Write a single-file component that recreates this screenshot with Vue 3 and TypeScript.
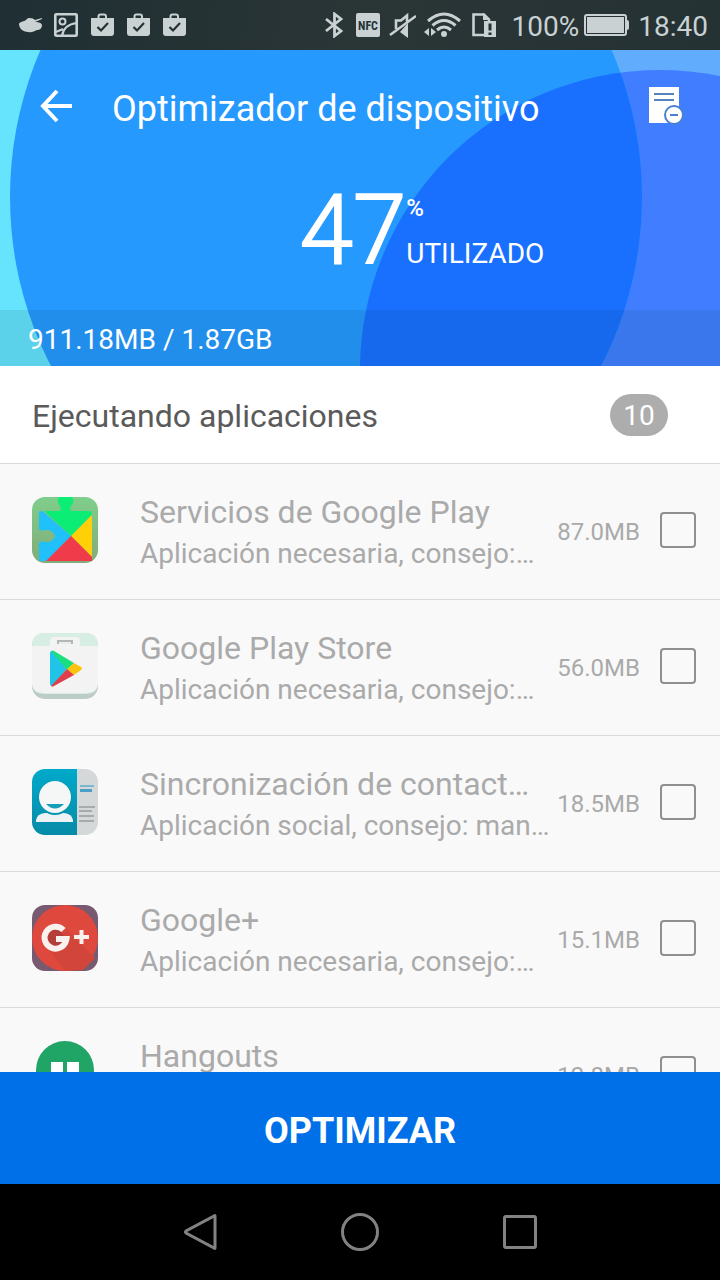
<script setup lang="ts">
import { ref } from 'vue'

interface RunningApp {
  id: string
  name: string
  advice: string
  size: string
  selected: boolean
}

const apps = ref<RunningApp[]>([
  { id: 'services', name: 'Servicios de Google Play', advice: 'Aplicación necesaria, consejo:…', size: '87.0MB', selected: false },
  { id: 'store', name: 'Google Play Store', advice: 'Aplicación necesaria, consejo:…', size: '56.0MB', selected: false },
  { id: 'contacts', name: 'Sincronización de contact…', advice: 'Aplicación social, consejo: man…', size: '18.5MB', selected: false },
  { id: 'plus', name: 'Google+', advice: 'Aplicación necesaria, consejo:…', size: '15.1MB', selected: false },
  { id: 'hangouts', name: 'Hangouts', advice: 'Aplicación social, consejo: man…', size: '12.8MB', selected: false },
])
</script>

<template>
  <div class="screen">
    <div class="status">
      <div class="notices">
        <svg width="24" height="26" viewBox="0 0 24 26" fill="#c9d1d3">
          <path d="M1 12c1-3 5-2 7-4 2-3 7-2 9 0l7-2v1l-7 3c2 0 6 0 7 3 0 3-2 5-5 5-3 1-5 3-9 2-4 0-9-3-9-8z" />
        </svg>
        <svg width="24" height="26" viewBox="0 0 24 26" fill="none" stroke="#c9d1d3" stroke-width="2.6">
          <rect x="1.3" y="2.3" width="21.4" height="21.4" rx="1" />
          <circle cx="8.5" cy="9.5" r="3" stroke-width="2" />
          <path d="M8 24c1-7 6-12 15-13M2 20l7-3" stroke-width="2.2" />
        </svg>
        <svg v-for="n in 3" :key="n" width="24" height="26" viewBox="0 0 24 26">
          <path d="M8.5 7V4.500Q8.500 2.500 10.500 2.500H14Q16 2.500 16 4.500V7" fill="none" stroke="#c9d1d3" stroke-width="2" />
          <path d="M1 6h23v15q0 3-3 3H4q-3 0-3-3z" fill="#c9d1d3" />
          <path d="M7.500 15l3.500 3.500 7-7.500" fill="none" stroke="#253233" stroke-width="2.2" />
        </svg>
      </div>
      <div class="signals">
        <svg width="24" height="26" viewBox="0 0 24 26" fill="none" stroke="#c9d1d3" stroke-width="2.800">
          <path d="M2 7l15 12-6.500 5V2L17 7 2 19" />
        </svg>
        <svg width="24" height="26" viewBox="0 0 24 26">
          <rect y="1" width="24" height="24" rx="2" fill="#c9d1d3" />
          <text x="12" y="18" text-anchor="middle" class="nfc">NFC</text>
        </svg>
        <svg width="28" height="26" viewBox="0 0 28 26" fill="none" stroke="#c9d1d3" stroke-width="2.600">
          <path d="M8 17V8.500h5L19 3.500v6M2 23L28 4" />
          <path d="M20 11v15l-8-6z" fill="#c9d1d3" stroke="none" />
        </svg>
        <svg width="40" height="26" viewBox="0 0 40 26" fill="none" stroke="#c9d1d3" stroke-width="3">
          <path d="M4 9Q20-5 36 9M8.500 13.500Q20 3.500 31.500 13.500M13 18Q20 12 27 18" />
          <circle cx="20" cy="22" r="3" fill="#c9d1d3" stroke="none" />
          <path d="M5 16v8l-5-4zM7 16v8l5-4z" fill="#c9d1d3" stroke="none" />
        </svg>
        <svg width="24" height="26" viewBox="0 0 24 26">
          <path d="M13 23H1.500V2.500H12l5 5V9" fill="none" stroke="#c9d1d3" stroke-width="2.600" />
          <path d="M11 1l7 7h-7zM12 9h12v16H12z" fill="#c9d1d3" />
          <path d="M18 11.500v7M18 20.500v2.500" stroke="#253233" stroke-width="3" />
        </svg>
      </div>
      <span class="charge">100%</span>
      <svg width="46" height="26" viewBox="0 0 46 26">
        <rect x="1" y="3" width="41" height="20" rx="2" fill="none" stroke="#c9d1d3" stroke-width="2" />
        <rect x="3" y="5" width="37" height="16" fill="#c9d1d3" />
        <path d="M42 8h1q2 0 2 2v6q0 2-2 2h-1z" fill="#c9d1d3" />
      </svg>
      <span class="clock">18:40</span>
    </div>

    <header class="hero">
      <svg class="backdrop" viewBox="0 0 720 316" preserveAspectRatio="none" aria-hidden="true">
        <defs>
          <clipPath id="big-disc"><ellipse cx="326" cy="147" rx="316" ry="343" /></clipPath>
        </defs>
        <rect width="360" height="316" fill="#66e4fd" />
        <rect x="360" width="360" height="316" fill="#62acfd" />
        <circle cx="660" cy="320" r="300" fill="#417eff" />
        <ellipse cx="326" cy="147" rx="316" ry="343" fill="#2699ff" />
        <circle cx="660" cy="320" r="300" fill="#1970ff" clip-path="url(#big-disc)" />
      </svg>
      <div class="toolbar">
        <button class="icon-button" type="button" aria-label="Atrás">
          <svg width="32" height="34" viewBox="0 0 32 34" fill="none" stroke="#fff" stroke-width="4">
            <path d="M32 17H3M17 2L3 17l14 15" />
          </svg>
        </button>
        <h1>Optimizador de dispositivo</h1>
        <button class="icon-button" type="button" aria-label="Lista de exclusión">
          <svg width="36" height="38" viewBox="0 0 36 38">
            <path d="M1 0h30v36H1z" fill="#fff" />
            <path d="M6 7h20M6 13h20" stroke="#5583bd" stroke-width="2" />
            <circle cx="26" cy="28" r="9" fill="#fff" stroke="#4a80d4" stroke-width="2" />
            <path d="M22 28h8" stroke="#4a80d4" stroke-width="2" />
          </svg>
        </button>
      </div>
      <div class="usage">
        <span class="number">47</span>
        <div class="labels">
          <span class="percent">%</span>
          <span class="used">UTILIZADO</span>
        </div>
      </div>
      <div class="memory">911.18MB / 1.87GB</div>
    </header>

    <div class="section">
      <h2>Ejecutando aplicaciones</h2>
      <span class="count">10</span>
    </div>

    <ul class="list">
      <li v-for="app in apps" :key="app.id">
        <label class="row">
          <svg v-if="app.id === 'services'" class="app-icon" viewBox="0 0 66 66">
            <defs>
              <linearGradient id="sage" x2="0" y2="1"><stop stop-color="#7fce8b" /><stop offset="1" stop-color="#83ab79" /></linearGradient>
              <clipPath id="puzzle"><path d="M10 14h17q3 0 1-5-4-4-1-9h13q3 5-1 9-2 5 1 5h17q3 0 3 3v47H7V46q2-3 6-1 8 1 10-6-2-7-10-6-4 2-6-1V17q0-3 3-3z" /></clipPath>
            </defs>
            <rect width="66" height="66" rx="13" fill="url(#sage)" />
            <g clip-path="url(#puzzle)">
              <path d="M0 0h66v11L39 39 6 8z" fill="#0ced76" />
              <path d="M6 10l33 29L13 66H6z" fill="#20c0fa" />
              <path d="M66 12L39 39l27 27z" fill="#ffcf08" />
              <path d="M39 39L12 66h54z" fill="#f03b4b" />
            </g>
          </svg>
          <svg v-else-if="app.id === 'store'" class="app-icon" viewBox="0 0 66 66">
            <rect width="66" height="66" rx="13" fill="#bdccc4" />
            <path d="M0 13Q0 0 13 0h40q13 0 13 13v37q0 11-13 11H13Q0 61 0 50z" fill="#d6eee4" />
            <path d="M0 13h18V8q0-4 4-4h22q4 0 4 4v5h18v36q0 11-13 11H13Q0 60 0 49z" fill="#f3f3f3" />
            <path d="M25 7h16v4H25z" fill="#b5b7b6" />
            <path d="M27 9h12v2H27z" fill="#e7efeb" />
            <path d="M18 20q0-2 2-2l15 18-15 17q-2 0-2-2z" fill="#20c4e8" />
            <path d="M19 18q1-1 3 0l20 12-7 7z" fill="#19df7e" />
            <path d="M42 30l7 4q2 1 0 3l-7 5-7-6z" fill="#fbc30c" />
            <path d="M35 36l7 6-20 11q-2 1-3 0z" fill="#df3f4c" />
          </svg>
          <svg v-else-if="app.id === 'contacts'" class="app-icon" viewBox="0 0 66 66">
            <defs>
              <linearGradient id="teal" x2="0" y2="1"><stop stop-color="#00a9ca" /><stop offset="1" stop-color="#078ba7" /></linearGradient>
              <clipPath id="tile"><rect width="66" height="66" rx="13" /></clipPath>
            </defs>
            <g clip-path="url(#tile)">
              <path d="M0 0h46v66H0z" fill="url(#teal)" />
              <path d="M45 0h21v66H45z" fill="#d5d8d9" />
              <path d="M4 51q1-6 9-7h19q8 1 9 7v2H4z" fill="#edf3f4" />
              <circle cx="23" cy="29" r="17" fill="#0795b2" />
              <circle cx="23" cy="28" r="16" fill="#f5f7f7" />
              <path d="M14 35h18q-9 9-18 0z" fill="#159fb9" />
              <path d="M48 17h14" stroke="#78b7d1" stroke-width="2" />
              <path d="M48 21.500h12" stroke="#4a9fc6" stroke-width="3" />
              <path d="M47 38h16M47 42h13M47 47h15M47 52h15" stroke="#969da0" stroke-width="1.500" />
            </g>
          </svg>
          <svg v-else-if="app.id === 'plus'" class="app-icon" viewBox="0 0 66 66">
            <defs><clipPath id="plus-tile"><rect width="66" height="66" rx="13" /></clipPath></defs>
            <g clip-path="url(#plus-tile)">
              <path d="M0 0h66v66H0z" fill="#785a70" />
              <circle cx="33" cy="33" r="33" fill="#df493d" />
              <path d="M15 42l20-17 28 28-12 12-18 1z" fill="#d2453a" />
            </g>
            <circle cx="23" cy="33" r="9" fill="#b53f38" />
            <path d="M31.500 25A11 11 0 1 0 34.500 34H24" fill="none" stroke="#f8f1ee" stroke-width="6" />
            <path d="M42 32h15M49.500 25v14" fill="none" stroke="#f8f1ee" stroke-width="4" />
          </svg>
          <svg v-else class="app-icon" viewBox="0 0 66 66">
            <path d="M33 0a29 29 0 0 1 29 29c0 15-12 27-25 37v-8h-4A29 29 0 0 1 33 0z" fill="#20a566" />
            <path d="M19 21h12v12l-4 7h-5l4-7h-7zM35 21h12v12l-4 7h-5l4-7h-7z" fill="#fff" />
          </svg>
          <span class="text">
            <span class="name">{{ app.name }}</span>
            <span class="advice">{{ app.advice }}</span>
          </span>
          <span class="size">{{ app.size }}</span>
          <input v-model="app.selected" type="checkbox" />
        </label>
      </li>
    </ul>

    <button class="optimize" type="button">OPTIMIZAR</button>

    <nav class="system">
      <button type="button" aria-label="Volver">
        <svg width="40" height="40" viewBox="0 0 40 40"><path d="M35 4v32q0 1-1 0L6 21q-1-1 0-2L34 4q1-1 1 0z" /></svg>
      </button>
      <button type="button" aria-label="Inicio">
        <svg width="40" height="40" viewBox="0 0 40 40"><circle cx="20" cy="20" r="17.500" /></svg>
      </button>
      <button type="button" aria-label="Recientes">
        <svg width="40" height="40" viewBox="0 0 40 40"><rect x="4.500" y="4.500" width="31" height="31" rx="1.500" /></svg>
      </button>
    </nav>
  </div>
</template>

<style>
body {
  margin: 0;
}
</style>

<style scoped>
.screen {
  display: flex;
  flex-direction: column;
  height: 100vh;
  overflow: hidden;
  background: #f9f9f9;
  font-family: Roboto, "Noto Sans", sans-serif;
}

svg {
  display: block;
  flex: none;
}

button {
  margin: 0;
  padding: 0;
  border: 0;
  background: none;
  font: inherit;
  cursor: pointer;
}

h1,
h2 {
  margin: 0;
  font-weight: 400;
}

.status {
  display: flex;
  flex: none;
  align-items: center;
  height: 50px;
  padding: 0 12px 0 18px;
  background: linear-gradient(100deg, #1f2f33, #2a3536 50%, #253233);
  color: #c9d1d3;
  font-size: 28px;
}

.notices {
  display: flex;
  flex: 1;
  gap: 12px;
}

.signals {
  display: flex;
  gap: 8px;
}

.nfc {
  fill: #253233;
  font-family: "Roboto Condensed", "Liberation Sans Narrow", Roboto, sans-serif;
  font-size: 12px;
  font-weight: 700;
}

.charge,
.clock {
  padding-top: 2px;
}

.charge {
  margin: 0 5px 0 16px;
}

.clock {
  margin-left: 8px;
}

.hero {
  position: relative;
  display: flex;
  flex: none;
  flex-direction: column;
  color: #fff;
}

.backdrop {
  position: absolute;
  inset: 0;
  width: 100%;
  height: 100%;
}

.toolbar,
.usage,
.memory {
  position: relative;
}

.toolbar {
  display: flex;
  align-items: center;
  height: 112px;
  padding: 0 36px 0 40px;
}

.toolbar h1 {
  flex: 1;
  padding: 6px 0 0 40px;
  font-size: 36px;
  line-height: 40px;
}

.usage {
  display: flex;
  justify-content: center;
  height: 148px;
}

.number {
  padding-left: 124px;
  font-size: 96px;
  font-weight: 300;
  line-height: 136px;
  -webkit-text-stroke: 2px #fff;
}

.labels {
  display: flex;
  flex-direction: column;
  padding-top: 28px;
}

.percent {
  height: 46px;
  font-size: 24px;
  font-weight: 500;
  line-height: 36px;
}

.used {
  font-size: 28px;
  line-height: 36px;
}

.memory {
  padding: 14px 28px 10px;
  background: rgba(0, 50, 70, 0.1);
  font-size: 28px;
  line-height: 32px;
}

.section {
  display: flex;
  flex: none;
  align-items: center;
  justify-content: space-between;
  padding: 28px 52px 27px 32px;
  background: #fff;
}

.section h2 {
  padding-top: 2px;
  color: #5a5a5a;
  font-size: 32px;
  line-height: 40px;
}

.count {
  min-width: 58px;
  padding-top: 2px;
  border-radius: 21px;
  background: #adadad;
  color: #fff;
  font-size: 28px;
  line-height: 40px;
  text-align: center;
}

.list {
  flex: 1 1 0;
  min-height: 0;
  margin: 0;
  padding: 0;
  overflow-y: auto;
  list-style: none;
  scrollbar-width: none;
}

.list li {
  border-top: 1px solid #dadada;
}

.row {
  display: flex;
  align-items: center;
  padding: 22px 24px 25px 32px;
  color: #aaa;
}

.app-icon {
  width: 66px;
  height: 66px;
}

.text {
  display: flex;
  flex: 1;
  flex-direction: column;
  gap: 2px;
  min-width: 0;
  padding: 6px 0 0 42px;
  white-space: nowrap;
}

.name {
  font-size: 32px;
  line-height: 40px;
}

.advice {
  font-size: 28px;
  line-height: 40px;
}

.size {
  padding: 4px 20px 0 0;
  font-size: 24px;
}

.row input {
  flex: none;
  width: 36px;
  height: 36px;
  margin: 0;
  border: 2px solid #8f8f8f;
  border-radius: 4px;
  appearance: none;
}

.row input:checked {
  background: #0070e8;
}

.optimize {
  flex: none;
  height: 112px;
  padding-top: 6px;
  background: #0070e8;
  color: #fff;
  font-size: 36px;
  font-weight: 700;
}

.system {
  display: flex;
  flex: none;
  justify-content: center;
  gap: 120px;
  padding: 28px 0;
  background: #000;
}

.system svg {
  fill: none;
  stroke: #828282;
  stroke-width: 3;
}
</style>
